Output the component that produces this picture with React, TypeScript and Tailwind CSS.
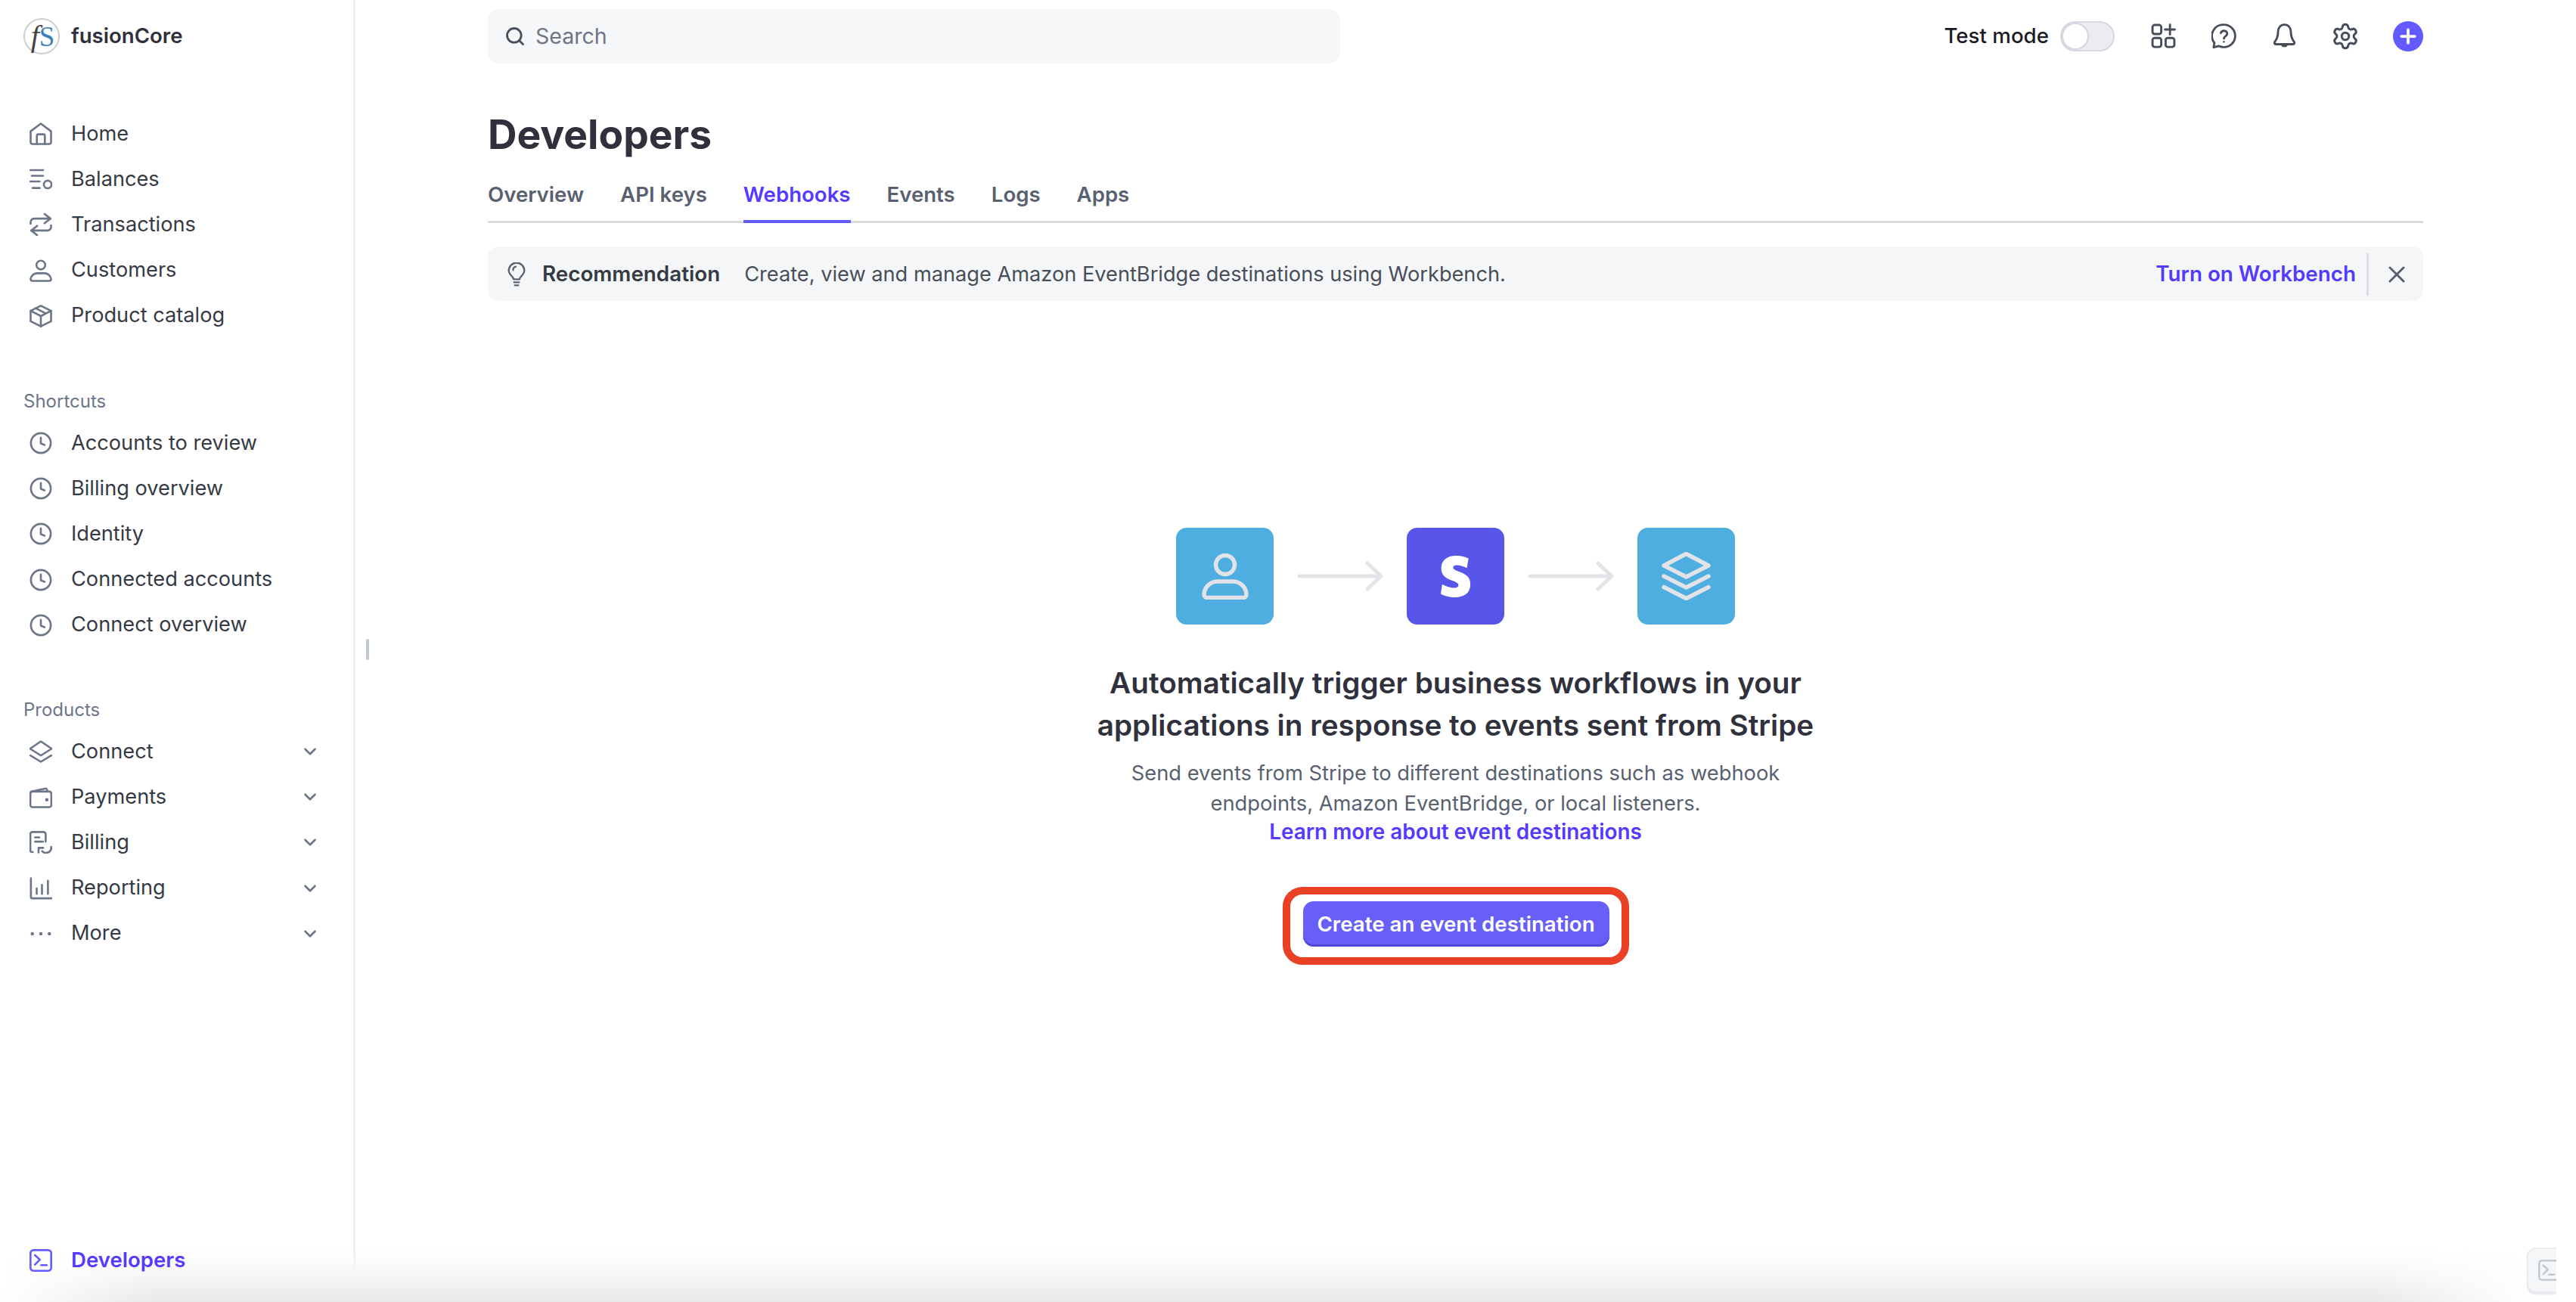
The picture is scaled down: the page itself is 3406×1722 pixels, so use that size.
import React from 'react';
import { SiStripe } from 'react-icons/si';
import { Settings, ChevronDown, Search, X, Plus } from 'lucide-react';

type IconProps = { className?: string };

// All nav icons share a 16 unit box drawn at 30px
const Svg = ({ className, children }: IconProps & { children: React.ReactNode }) => (
  <svg
    viewBox="0 0 16 16"
    fill="none"
    stroke="currentColor"
    strokeWidth={1.4}
    strokeLinecap="round"
    strokeLinejoin="round"
    className={className}
  >
    {children}
  </svg>
);

const HomeIcon = (p: IconProps) => (
  <Svg {...p}>
    <path d="M.8 6.200 8 .8l7.200 5.400v7.600a1.400 1.400 0 0 1-1.400 1.400H2.200a1.400 1.400 0 0 1-1.400-1.400z" />
    <path d="M5.200 15.200V9.300a1 1 0 0 1 1-1h3.600a1 1 0 0 1 1 1v5.900" />
  </Svg>
);
const BalancesIcon = (p: IconProps) => (
  <Svg {...p}>
    <path d="M.6 1.600h9M1.600 5.600h8M.6 9.600h6.600M2.200 14.200h5" />
    <circle cx="12.800" cy="11.700" r="2.700" />
  </Svg>
);
const TransactionsIcon = (p: IconProps) => (
  <Svg {...p}>
    <path d="M.8 7.400V6.300a2.500 2.500 0 0 1 2.500-2.500H14.800M10.600.5l4.200 3.300-4.200 3.300" />
    <path d="M15.200 8.600v1.100a2.500 2.500 0 0 1-2.500 2.500H1.200M5.400 8.900l-4.200 3.300 4.200 3.300" />
  </Svg>
);
const CustomersIcon = (p: IconProps) => (
  <Svg {...p}>
    <circle cx="8" cy="4" r="3.100" />
    <path d="M5.500 9.800h5a4.700 4.700 0 0 1 4.700 4v.100a1.300 1.300 0 0 1-1.300 1.300H2.100a1.300 1.300 0 0 1-1.300-1.300v-.100a4.700 4.700 0 0 1 4.700-4z" />
  </Svg>
);
const CatalogIcon = (p: IconProps) => (
  <Svg {...p}>
    <path d="M8 .7l7.200 3.600v7.400L8 15.300.8 11.700V4.300z" />
    <path d="M.8 4.300 8 8l7.200-3.700M8 8v7.300M4.300 2.500l7.300 3.700" />
  </Svg>
);
const ClockIcon = (p: IconProps) => (
  <Svg {...p}>
    <circle cx="8" cy="8" r="7" />
    <path d="M8 4.200v4.100l2.600 1" />
  </Svg>
);
const ConnectIcon = (p: IconProps) => (
  <Svg {...p}>
    <path d="M8 .8 15.600 6 8 10.800.4 6z" />
    <path d="M.6 10.700 8 15.200l7.400-4.500" />
  </Svg>
);
const PaymentsIcon = (p: IconProps) => (
  <Svg {...p}>
    <rect x=".6" y="4.200" width="14.800" height="11" rx="1.500" />
    <path d="M1 4.300 11 2.100c.7-.2 1.400.3 1.400 1v1.100" />
    <circle cx="12.200" cy="10" r=".5" fill="currentColor" />
  </Svg>
);
const BillingIcon = (p: IconProps) => (
  <Svg {...p}>
    <path d="M2.300 14.800c-.9.300-1.700-.1-1.700-1V2.200A1.500 1.500 0 0 1 2.100.7h7.800a1.500 1.500 0 0 1 1.500 1.500v5.300" />
    <path d="M3.900 4.500h3M3.900 7.500h5.600" />
    <path d="M15.300 11.200a3.700 3.700 0 0 1-6.400 3M6.400 15.200v-3.300h3.300" />
  </Svg>
);
const ReportingIcon = (p: IconProps) => (
  <Svg {...p}>
    <path d="M1 .8V14a1 1 0 0 0 1 1h13.500" />
    <path d="M5.100 8v3.800M8.800 5.500v6.300M13 2.600v9.200" />
  </Svg>
);
const MoreIcon = (p: IconProps) => (
  <Svg {...p}>
    <circle cx="2" cy="8" r="1.200" fill="currentColor" stroke="none" />
    <circle cx="8" cy="8" r="1.200" fill="currentColor" stroke="none" />
    <circle cx="14" cy="8" r="1.200" fill="currentColor" stroke="none" />
  </Svg>
);
const TerminalIcon = (p: IconProps) => (
  <Svg {...p}>
    <rect x=".7" y=".7" width="14.600" height="14.600" rx="2.200" />
    <path d="M3.800 4.300 7.300 7.500 3.800 11M8.200 11.300h4" />
  </Svg>
);
const GridPlusIcon = (p: IconProps) => (
  <Svg {...p}>
    <rect x="1" y="1" width="5.600" height="5.800" rx="1.400" />
    <rect x="1" y="9.300" width="5.600" height="5.800" rx="1.400" />
    <rect x="9.400" y="9.300" width="5.600" height="5.800" rx="1.400" />
    <path d="M12.200.8v6.300M9 3.900h6.300" />
  </Svg>
);
const HelpIcon = (p: IconProps) => (
  <Svg {...p}>
    <path d="M8 .8a7.200 7.200 0 0 1 0 14.400c-1.200 0-2.300-.3-3.300-.7l-3.300.8.500-2.800A7.200 7.200 0 0 1 8 .8z" />
    <path d="M6 6.100A2.100 2.100 0 0 1 8 4.700c1.200 0 2.100.8 2.100 1.900 0 1.600-2.100 1.600-2.100 3.100" />
    <circle cx="8" cy="11.800" r=".6" fill="currentColor" stroke="none" />
  </Svg>
);
const BellIcon = (p: IconProps) => (
  <Svg {...p}>
    <path d="M8 .8c2.500 0 4.100 2 4.100 4.500 0 3.400 1 5 2.100 6.500.5.700.2 1.500-.7 1.500H2.500c-.9 0-1.200-.8-.7-1.500C2.900 10.300 3.900 8.700 3.900 5.300 3.900 2.800 5.500.8 8 .8z" />
    <path d="M6.300 13.300a1.800 1.800 0 0 0 3.400 0" />
  </Svg>
);

const main = [
  { label: 'Home', Icon: HomeIcon },
  { label: 'Balances', Icon: BalancesIcon },
  { label: 'Transactions', Icon: TransactionsIcon },
  { label: 'Customers', Icon: CustomersIcon },
  { label: 'Product catalog', Icon: CatalogIcon },
];
const shortcuts = ['Accounts to review', 'Billing overview', 'Identity', 'Connected accounts', 'Connect overview'];
const products = [
  { label: 'Connect', Icon: ConnectIcon },
  { label: 'Payments', Icon: PaymentsIcon },
  { label: 'Billing', Icon: BillingIcon },
  { label: 'Reporting', Icon: ReportingIcon },
  { label: 'More', Icon: MoreIcon },
];
const tabs = ['Overview', 'API keys', 'Webhooks', 'Events', 'Logs', 'Apps'];

const NavRow = ({ label, Icon, chevron }: { label: string; Icon: React.FC<IconProps>; chevron?: boolean }) => (
  <div className="flex h-[60.2px] items-center pl-[8px] pr-[13px] text-[27.2px] text-[#353a44]">
    <Icon className="mr-[25px] h-[30px] w-[30px] text-[#6c7688]" />
    <span className="flex-1">{label}</span>
    {chevron && <ChevronDown className="h-[26px] w-[26px] text-[#6c7688]" strokeWidth={2.4} />}
  </div>
);

const ArrowRight = () => (
  <svg viewBox="0 0 114 40" className="h-[40px] w-[114px]" fill="none" stroke="#e2e4e8" strokeWidth={5} strokeLinecap="round" strokeLinejoin="round">
    <path d="M3 20h108M93 3l18 17-18 17" />
  </svg>
);

const App: React.FC = () => {
  return (
    <div className="h-[1722px] w-[3406px] bg-white font-['Inter',sans-serif]">
      <div className="relative flex h-full w-[3380px] overflow-hidden">
        {/* Sidebar */}
        <aside className="flex h-full w-[470px] shrink-0 flex-col border-r-[3px] border-[#eff0f4] px-[31px]">
          <div className="flex h-[96px] items-center">
            <div className="flex h-[48px] w-[48px] items-center justify-center rounded-full border-2 border-[#cfcfcf] pl-[3px] font-['Liberation_Serif',serif]">
              <span className="text-[40px] italic leading-none text-[#444444]">f</span>
              <span className="text-[37px] leading-none text-[#3b80bd]">S</span>
            </div>
            <span className="ml-[15px] text-[27.6px] font-semibold text-[#30313d]">fusionCore</span>
          </div>

          <nav className="mt-[51px]">
            {main.map((m) => (
              <NavRow key={m.label} label={m.label} Icon={m.Icon} />
            ))}
          </nav>

          <div className="mt-[65px] text-[24px] leading-[36px] text-[#6c7688]">Shortcuts</div>
          <div className="mt-[7px]">
            {shortcuts.map((s) => (
              <NavRow key={s} label={s} Icon={ClockIcon} />
            ))}
          </div>

          <div className="mt-[64px] text-[24px] leading-[36px] text-[#6c7688]">Products</div>
          <div className="mt-[7px]">
            {products.map((p) => (
              <NavRow key={p.label} label={p.label} Icon={p.Icon} chevron />
            ))}
          </div>

          <div className="relative z-10 mb-[25px] mt-auto flex h-[60px] items-center pl-[8px] text-[27.6px] font-semibold text-[#533afd]">
            <TerminalIcon className="mr-[25px] h-[30px] w-[30px] text-[#635bff]" />
            Developers
          </div>
        </aside>

        {/* Scrubber between sidebar and content */}
        <div className="absolute left-[484px] top-[845px] h-[28px] w-[4px] rounded-full bg-[#c0c8d2]" />

        {/* Main */}
        <main className="flex min-w-0 flex-1 flex-col pl-[175px] pr-[176px]">
          <header className="flex h-[96px] items-center justify-between">
            <div className="flex h-[72px] w-[1127px] items-center rounded-[14px] bg-[#f6f7f9] pl-[22px] text-[28.500px] text-[#6c7688]">
              <Search className="mr-[13px] h-[28px] w-[28px] text-[#474e5a]" strokeWidth={2.4} />
              Search
            </div>
            <div className="flex items-center">
              <span className="text-[27.7px] font-medium text-[#1a1b25]">Test mode</span>
              <div className="ml-[15px] h-[40px] w-[72px] rounded-full border-2 border-[#d5d8de] bg-[#ebedf1]">
                <div className="h-[36px] w-[36px] rounded-full border-2 border-[#d5d8de] bg-white" />
              </div>
              <GridPlusIcon className="ml-[48px] h-[33px] w-[33px] text-[#474e5a]" />
              <HelpIcon className="ml-[47px] h-[33px] w-[33px] text-[#474e5a]" />
              <BellIcon className="ml-[47px] h-[33px] w-[33px] text-[#474e5a]" />
              <Settings className="ml-[45px] h-[38px] w-[38px] text-[#474e5a]" strokeWidth={1.9} />
              <div className="ml-[44px] flex h-[40px] w-[40px] items-center justify-center rounded-full bg-[#635bff]">
                <Plus className="h-[30px] w-[30px] text-white" strokeWidth={3} />
              </div>
            </div>
          </header>

          <h1 className="mt-[50px] text-[53.3px] font-bold leading-[64px] text-[#30313d]">Developers</h1>

          <div className="mt-[24px] flex gap-[48px] border-b-[3px] border-[#d8dbe0] pt-[3px]">
            {tabs.map((t) => (
              <div
                key={t}
                className={`-mb-[3px] border-b-[4px] pb-[14px] text-[27.6px] font-semibold leading-[40px] ${
                  t === 'Webhooks' ? 'border-[#635bff] text-[#533afd]' : 'border-transparent text-[#596171]'
                }`}
              >
                {t}
              </div>
            ))}
          </div>

          <div className="mt-[31px] flex h-[72px] items-center rounded-[14px] bg-[#f5f6f8] pl-[26px] pr-[17px] pt-[2px] text-[27.8px]">
            <svg viewBox="0 0 20 28" className="mr-[22px] h-[32px] w-[24px] text-[#596171]" fill="none" stroke="currentColor" strokeWidth={2} strokeLinecap="round" strokeLinejoin="round">
              <path d="M6.500 19.500c0-3-5.500-5-5.500-10a9 9 0 0 1 18 0c0 5-5.500 7-5.500 10z" />
              <path d="M7 23h6M8 26.500h4M6 9a4 4 0 0 1 3-4" />
            </svg>
            <span className="font-semibold text-[#353a44]">Recommendation</span>
            <span className="ml-[32px] flex-1 text-[27.2px] text-[#474e5a]">Create, view and manage Amazon EventBridge destinations using Workbench.</span>
            <span className="font-semibold text-[#533afd]">Turn on Workbench</span>
            <div className="ml-[14px] mr-[19px] h-[56px] w-[3px] bg-[#dcdee3]" />
            <X className="h-[36px] w-[36px] text-[#596171]" strokeWidth={2} />
          </div>

          {/* Empty state */}
          <div className="mt-[300px] flex flex-col items-center">
            <div className="flex items-center gap-[31px]">
              <div className="flex h-[128px] w-[129px] items-center justify-center rounded-[14px] bg-[#4eaee0]">
                <svg viewBox="0 0 62 61" className="h-[61px] w-[62px]" fill="none" stroke="#e2e3e8" strokeWidth={5.500} strokeLinecap="round" strokeLinejoin="round">
                  <circle cx="31" cy="15" r="12.500" />
                  <path d="M21 37h20a18 18 0 0 1 18 17.500 4 4 0 0 1-4 4H7a4 4 0 0 1-4-4A18 18 0 0 1 21 37z" />
                </svg>
              </div>
              <ArrowRight />
              <div className="flex h-[128px] w-[129px] items-center justify-center rounded-[14px] bg-[#5856e8]">
                <SiStripe className="h-[55px] w-[55px] text-white" />
              </div>
              <ArrowRight />
              <div className="flex h-[128px] w-[129px] items-center justify-center rounded-[14px] bg-[#4eaee0]">
                <svg viewBox="0 0 65 64" className="h-[64px] w-[65px]" fill="none" stroke="#e2e3e8" strokeWidth={5.500} strokeLinecap="round" strokeLinejoin="round">
                  <path d="M32.500 2.500 62 18 32.500 33 3 18z" />
                  <path d="M3 32l29.500 15L62 32M3 46.500l29.500 15L62 46.500" />
                </svg>
              </div>
            </div>

            <h2 className="mt-[49px] text-center text-[38.7px] font-semibold leading-[56px] text-[#30313d]">
              Automatically trigger business workflows in your
              <br />
              applications in response to events sent from Stripe
            </h2>
            <p className="mt-[16px] text-center text-[27.3px] leading-[40px] text-[#596171]">
              Send events from Stripe to different destinations such as webhook
              <br />
              endpoints, Amazon EventBridge, or local listeners.
            </p>
            <div className="-mt-[1px] text-[27.9px] font-semibold leading-[36px] text-[#533afd]">Learn more about event destinations</div>

            <div className="mt-[55px] rounded-[26px] border-[10px] border-[#ea4026] pb-[14px] pl-[17px] pr-[16px] pt-[9px]">
              <button className="flex h-[60px] w-[405px] items-center justify-center rounded-[14px] bg-[#675ff7] pt-[2px] text-[27.7px] font-semibold text-white shadow-[inset_0_-3px_0_#5149d8]">
                Create an event destination
              </button>
            </div>
          </div>
        </main>

        {/* Shadow along the bottom edge of the window */}
        <div className="pointer-events-none absolute inset-x-0 bottom-0 h-[70px] bg-gradient-to-t from-[#e9e9e9] via-[#f6f6f6] to-transparent [mask-image:linear-gradient(to_right,transparent,black_6%,black_93%,transparent_99%)]" />

        {/* Collapsed panel tab, cut by the window edge */}
        <div className="absolute bottom-[12px] right-0 flex h-[60px] w-[39px] items-center overflow-hidden rounded-l-[12px] border-2 border-r-0 border-[#e9ebee] bg-[#f5f6f8] pl-[13px] shadow-[0_2px_2px_#e4e5e8]">
          <TerminalIcon className="h-[28px] w-[28px] shrink-0 text-[#c0c8d2]" />
        </div>
      </div>
    </div>
  );
};

export default App;
